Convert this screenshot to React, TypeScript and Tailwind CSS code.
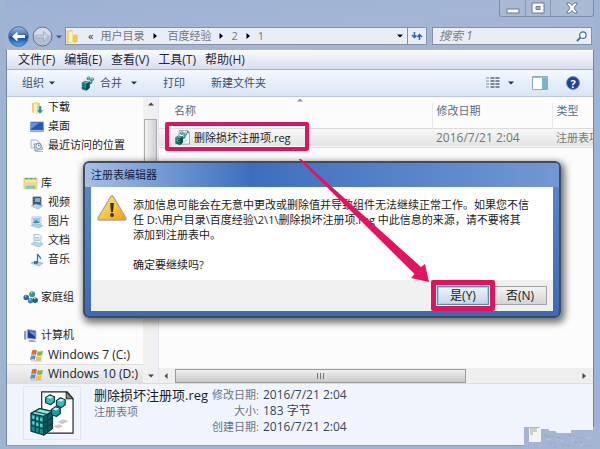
import React from "react";

const FONT = "font-['Open_Sans','Noto_Sans_CJK_SC',sans-serif]";

function Icon({ children, className = "size-[14px]", box = "0 0 14 14" }: { children: React.ReactNode; className?: string; box?: string }) {
  return (
    <svg viewBox={box} className={`shrink-0 ${className}`} aria-hidden="true">
      {children}
    </svg>
  );
}

const Arrow = ({ dir = "down", className = "" }: { dir?: "down" | "up" | "left" | "right"; className?: string }) => {
  const d = {
    down: "M0 1.5h6L3 4.5z",
    up: "M0 4.5h6L3 1.5z",
    left: "M4.5 0v6L1.5 3z",
    right: "M1.5 0v6L5 3z",
  }[dir];
  return (
    <svg viewBox="0 0 6 6" className={`size-[6px] shrink-0 ${className}`} aria-hidden="true">
      <path d={d} fill="currentColor" />
    </svg>
  );
};

const Folder = () => (
  <Icon className="size-[15px]">
    <path d="M1 2l4-1 1 1v10l-5 1z" fill="#f4dc7c" stroke="#d9b84c" strokeWidth=".5" />
    <path d="M6 6l3-1 2 1v6l-3 1-2-1z" fill="#eecb58" />
    <path d="M3 2.500l3 .5v10l-3-1z" fill="#fdf3b8" />
  </Icon>
);

const Downloads = () => (
  <Icon>
    <path d="M2 2l4-1 4 1v9l-4 2-4-2z" fill="#f0d271" />
    <path d="M4 2l3 1v10l-3-1z" fill="#fbf0b0" />
    <path d="M8.500 5h3v4h2L10 13 6.500 9h2z" fill="#2a8cc4" stroke="#dff0f8" strokeWidth=".5" />
  </Icon>
);

const Desktop = () => (
  <Icon>
    <path d="M.5 2h13v9.500H.5z" fill="#2558bd" stroke="#7b9fce" strokeWidth=".8" />
    <path d="M1 3h8l-8 6z" fill="#5f91e0" />
    <path d="M1 10.500h12" stroke="#a9c2e6" />
  </Icon>
);

const Recent = () => (
  <Icon>
    <path d="M1 1h6l2 2v6H1z" fill="#f2f6fa" stroke="#8e9fae" strokeWidth=".7" />
    <path d="M4 5l6-1 3 6-8 2z" fill="#c9d8e6" stroke="#6f8aa5" strokeWidth=".7" />
    <circle cx="8.500" cy="7" r="2.500" fill="#fff" stroke="#4b78a4" strokeWidth=".7" />
    <path d="M8.500 5.500V7H10" stroke="#335" strokeWidth=".6" fill="none" />
    <path d="M5 12.500h8" stroke="#a9c1d9" />
  </Icon>
);

const Library = () => (
  <Icon className="size-[15px]">
    <path d="M1 2h12v10H1z" fill="#f6e6a0" stroke="#d3b963" strokeWidth=".7" />
    <path d="M2 2.500h3M6 2.500h3M10 2.500h2" stroke="#58a68c" strokeWidth="1.500" />
    <path d="M1 6h12v6H1z" fill="#efd985" />
    <path d="M3 12V9.500h8V12" fill="#8cc5de" stroke="#6da7c8" strokeWidth=".5" />
  </Icon>
);

const Video = () => (
  <Icon>
    <path d="M3 1h8v9H3z" fill="#3b5673" stroke="#263c52" strokeWidth=".6" />
    <path d="M5 2h5v4H5z" fill="#7fb1d3" />
    <path d="M4 1v9M10.500 1v9" stroke="#a8b9c6" strokeWidth=".5" strokeDasharray="1 1" />
    <path d="M1 10l5-2 7 2-5 3z" fill="#b9d4e7" stroke="#7fa5c2" strokeWidth=".5" />
  </Icon>
);

const Pictures = () => (
  <Icon>
    <path d="M2 2h9v7H2z" fill="#fff" stroke="#8fabc3" strokeWidth=".7" />
    <path d="M3 3h7v5H3z" fill="#8fcaec" />
    <path d="M3 8l3-3 4 3z" fill="#3c8f9d" />
    <path d="M1 10.500l4-2 8 2-4 2.500z" fill="#aad0eb" stroke="#6da0c8" strokeWidth=".5" />
  </Icon>
);

const Documents = () => (
  <Icon>
    <path d="M4 .5h5l2 2V10H4z" fill="#f1f8fc" stroke="#8aabc1" strokeWidth=".7" />
    <path d="M5 3.500h4M5 5h5M5 6.500h5" stroke="#7fb4cf" strokeWidth=".7" />
    <path d="M1 10l4-2 8 2-4 3z" fill="#b5d6e9" stroke="#7fa8c4" strokeWidth=".5" />
  </Icon>
);

const Music = () => (
  <Icon>
    <path d="M1 10l4-2 8 2-4 3z" fill="#a7cfea" stroke="#6fa4c8" strokeWidth=".5" />
    <ellipse cx="5.800" cy="9.500" rx="2.200" ry="1.600" fill="#2177b5" />
    <path d="M7.500 9.500V1c.5 2 3 2 3 5" fill="none" stroke="#2177b5" strokeWidth="1.300" />
  </Icon>
);

const HomeGroup = () => (
  <Icon className="size-[15px]">
    <circle cx="3" cy="7" r="2.600" fill="#3566a8" />
    <circle cx="8.500" cy="4" r="2.800" fill="#3c9a7b" />
    <circle cx="7" cy="10" r="2.500" fill="#3b86b8" />
    <circle cx="11.300" cy="9.500" r="2.600" fill="#1e6a68" />
    <path d="M2 6l1-.8M7.500 3l1.200-.8M6 9.500l1-.8M10.500 8.500l1-.8" stroke="#d6f0ee" strokeWidth="1" />
  </Icon>
);

const Computer = () => (
  <Icon className="size-[15px]">
    <path d="M4 1.500l8 1v8l-8-1z" fill="#203a9e" stroke="#a8b3cd" strokeWidth=".8" />
    <path d="M5 3l6 5V3.500z" fill="#6f8ee8" />
    <path d="M1 3l2-.5V11l-2-.5z" fill="#8b96b6" />
    <path d="M5 11l5 .5 3 1.500H6z" fill="#9ba5bb" />
  </Icon>
);

const WinDrive = () => (
  <Icon>
    <path d="M2 2.500c2-1 3-1 5 0L6 7c-1.500-.8-3-.8-4.800 0z" fill="#de6b3c" />
    <path d="M7.800 3c2 .8 3 .8 5.200-.2l-1 4.400c-2 .8-3.500.8-5.200 0z" fill="#7db84a" />
    <path d="M1 7.800c2-.8 3.200-.8 4.800 0l-1 4C3.500 11 2 11 0 12z" fill="#5a8fd6" />
    <path d="M6.600 8c1.800.8 3.200.8 5.200 0l-1 4.200c-2 .8-3.500.8-5.200 0z" fill="#eec14a" />
    <path d="M1 13h11" stroke="#a9b0b6" strokeWidth=".8" />
  </Icon>
);

/* Registry cubes: a large block with three smaller ones flying off. */
const Cubes = () => (
  <g stroke="#063b40" strokeWidth="1.200" strokeLinejoin="round">
    <path d="M2 24l9-5 13 3v17l-9 7-13-4z" fill="#168a8c" />
    <path d="M2 24l9-5 13 3-9 5z" fill="#8fe3e0" />
    <path d="M15 27l9-5v17l-9 7z" fill="#0b5c62" />
    <path d="M6.500 25v18M10.500 26v19M2 30l13 4 9-6M2 36l13 4 9-6M6 22l13 3M19 25v18" fill="none" />
    <path d="M3.500 26l2 .5v3l-2-.5zM7.500 27.500l2 .5v3l-2-.5zM11.500 28.500l2 .5v3l-2-.5zM3.500 32l2 .5v3l-2-.5zM7.500 33.500l2 .5v3l-2-.5zM11.500 34.500l2 .5v3l-2-.5z" fill="#68d8d5" stroke="none" />
    <path d="M17 8l4-3 5 2v5l-4 3-5-2z" fill="#3cb6b6" />
    <path d="M28 11l4-3 5 2v5l-4 3-5-2z" fill="#3cb6b6" />
    <path d="M23 20l4-3 5 2v5l-4 3-5-2z" fill="#259b9d" />
    <path d="M18 8l3-2 4 1-3 2zM29 11l3-2 4 1-3 2zM24 20l3-2 4 1-3 2z" fill="#b7f2ee" stroke="none" />
  </g>
);

const RegFile = ({ className }: { className: string }) => (
  <Icon className={className} box="0 0 47 47">
    <path d="M13 2h26l6 7v35H13z" fill="#fff" stroke="#222" strokeWidth="1.200" />
    <path d="M38 2v7h7z" fill="#888" stroke="#222" />
    <path d="M29 33l6-3 5 2-6 3zM25 37l6-2 4 2-6 2z" fill="#c9c9c9" />
    <Cubes />
  </Icon>
);

type Item = { icon?: React.ReactNode; text?: string; root?: boolean; latin?: boolean; selected?: boolean };

const TREE: Item[] = [
  { icon: <Downloads />, text: "下载" },
  { icon: <Desktop />, text: "桌面" },
  { icon: <Recent />, text: "最近访问的位置" },
  {},
  { icon: <Library />, text: "库", root: true },
  { icon: <Video />, text: "视频" },
  { icon: <Pictures />, text: "图片" },
  { icon: <Documents />, text: "文档" },
  { icon: <Music />, text: "音乐" },
  {},
  { icon: <HomeGroup />, text: "家庭组", root: true },
  {},
  { icon: <Computer />, text: "计算机", root: true },
  { icon: <WinDrive />, text: "Windows 7 (C:)", latin: true },
  { icon: <WinDrive />, text: "Windows 10 (D:)", latin: true, selected: true },
];

function TitleBar() {
  return (
    <header className="flex h-[25px] items-start justify-end">
      <div className="flex h-[17px] overflow-hidden rounded-b-[3px] border border-t-0 border-[#7d8da8] bg-[#a9b9d3]">
        <button aria-label="最小化" className="flex w-[26px] items-center justify-center border-r border-[#8999b3]">
          <svg viewBox="0 0 14 12" className="h-3 w-[14px]"><rect x="1" y="7" width="12" height="4" fill="#fff" stroke="#68778e" /></svg>
        </button>
        <button aria-label="最大化" className="flex w-[25px] items-center justify-center border-r border-[#8999b3]">
          <svg viewBox="0 0 14 12" className="h-3 w-[14px]"><path fillRule="evenodd" d="M1 1h12v10H1zM5 4.500v3h4v-3z" fill="#fff" stroke="#68778e" /></svg>
        </button>
        <button aria-label="关闭" className="flex w-[42px] items-center justify-center">
          <svg viewBox="0 0 14 12" className="h-3 w-[14px]"><path d="M1.500 1h3.500l2 2.500L9 1h3.500L9 6l3.500 5H9L7 8.500 5 11H1.500L5 6z" fill="#fff" stroke="#68778e" /></svg>
        </button>
      </div>
    </header>
  );
}

function AddressBar() {
  return (
    <div className="flex h-[25px] items-start pr-[2px]">
      <div className="flex h-[23px] w-[59px] items-center gap-[3px] pl-[2px]">
        <button aria-label="后退" className="size-[21px]">
          <svg viewBox="0 0 21 21" className="size-[21px]">
            <defs>
              <linearGradient id="back" x1="0" y1="0" x2="0" y2="1">
                <stop offset="0" stopColor="#9fbce4" /><stop offset=".45" stopColor="#3c6cb6" /><stop offset=".55" stopColor="#17479b" /><stop offset="1" stopColor="#4fb4ec" />
              </linearGradient>
            </defs>
            <circle cx="10.500" cy="10.500" r="9.800" fill="url(#back)" stroke="#4e6a96" />
            <path d="M4 10.500l5.500-5v3.500H17v3H9.500v3.500z" fill="#fff" />
          </svg>
        </button>
        <button aria-label="前进" className="size-[21px]">
          <svg viewBox="0 0 21 21" className="size-[21px]">
            <circle cx="10.500" cy="10.500" r="9.500" fill="#b3bfd0" stroke="#66758f" />
            <path d="M2 9a8.600 8.600 0 0117 0c-6 2-11 2-17 0z" fill="#d5dce6" />
            <path d="M17 10.500l-5.500-5v3.500H4v3h7.500v3.500z" fill="#c5ced9" stroke="#98a5b6" strokeWidth=".7" />
          </svg>
        </button>
        <button aria-label="最近页面"><Arrow className="text-[#31598f]" /></button>
      </div>
      <div className="mt-[2px] flex h-[18px] flex-1 items-center border border-[#8191ab] bg-[#e9edf5] text-[11px] text-[#707781]">
        <div className="flex flex-1 items-center whitespace-nowrap">
          <Folder />
          <span className="ml-[7px] text-[#333]">«</span>
          <span className="ml-[7px]">用户目录</span>
          <Arrow dir="right" className="ml-2 text-black" />
          <span className="ml-[9px]">百度经验</span>
          <Arrow dir="right" className="ml-[7px] text-black" />
          <span className="ml-[7px]">2</span>
          <Arrow dir="right" className="ml-[7px] text-black" />
          <span className="ml-[7px]">1</span>
        </div>
        <button aria-label="历史" className="mr-1"><Arrow className="text-black" /></button>
        <button aria-label="刷新" className="flex h-full w-[19px] items-center justify-center border-l border-[#8191ab]">
          <svg viewBox="0 0 12 10" className="h-[10px] w-3" fill="none" stroke="#2c64aa" strokeWidth="1.500">
            <path d="M3.500 1v5M1 4l2.500 2.500L5.500 4.500M8.500 9V4M6.500 6l2-2.500L11 6" />
          </svg>
        </button>
      </div>
      <label className="mt-[2px] ml-[5px] flex h-[18px] w-[160px] items-center border border-[#8191ab] bg-[#e9edf5] pr-1">
        <input aria-label="搜索" placeholder="搜索 1" className="min-w-0 flex-1 bg-transparent pl-[6px] text-[12px] italic outline-none placeholder:text-[#777d86]" />
        <svg viewBox="0 0 12 12" className="size-[11px]" fill="none" stroke="#45689c"><circle cx="7.500" cy="4.500" r="3.500" strokeWidth="1.300" fill="#f5fbff" /><path d="M5 7L1 11" strokeWidth="2" /></svg>
      </label>
    </div>
  );
}

function Toolbar() {
  return (
    <div className="flex h-[27px] items-center border-b border-[#b9c6d9] bg-linear-to-b from-[#f5f9fe] via-[#e6eef9] to-[#dae5f4] pl-[15px] text-[11px] text-[#3b4f70]">
      <button className="flex items-center gap-[5px]">组织<Arrow className="text-[#25344c]" /></button>
      <button className="ml-[26px] flex items-center gap-[5px]">
        <svg viewBox="0 0 40 48" className="h-4 w-[14px]"><Cubes /></svg>
        合并<Arrow className="ml-1 text-[#25344c]" />
      </button>
      <button className="ml-[26px]">打印</button>
      <button className="ml-[26px]">新建文件夹</button>
      <div className="ml-auto flex items-center pr-[13px]">
        <button aria-label="更改视图" className="flex items-center gap-2">
          <svg viewBox="0 0 15 13" className="h-[13px] w-[15px]">
            <path d="M1 1h3M1 4h3M1 7h3M1 10h3" stroke="#b7bfca" strokeWidth="2" />
            <path d="M5.500 1h4M5.500 4h4M5.500 7h4M5.500 10h4M10.500 1h4M10.500 4h4M10.500 7h4M10.500 10h4" stroke="#7c8897" strokeWidth="1.800" />
          </svg>
          <Arrow className="text-[#25344c]" />
        </button>
        <button aria-label="预览窗格" className="ml-[18px]">
          <svg viewBox="0 0 16 14" className="h-[14px] w-4"><path d="M.5.500h15v13H.5z" fill="#fff" stroke="#93a9b8" /><path d="M10 1h5v12h-5z" fill="#77b6c5" /><path d="M.5 1.500h15" stroke="#9ebfce" /></svg>
        </button>
        <button aria-label="帮助" className="ml-[18px] flex size-[14px] items-center justify-center rounded-full border border-[#8090bf] bg-[#20409e] text-[11px] leading-none font-bold text-white">?</button>
      </div>
    </div>
  );
}

function Sidebar() {
  return (
    <nav className="w-[136px] shrink-0 bg-[#fcfcfd] pt-px" aria-label="导航">
      <ul>
        {TREE.map((it, i) => (
          <li key={i} className={`h-[19px] ${it.selected ? "border-t border-[#dedede] bg-linear-to-b from-[#f4f4f4] to-[#dfdfdf]" : ""}`}>
            {it.text && (
              <a href="#" className={`flex h-full items-center whitespace-nowrap text-[#222] ${it.root ? "gap-[3px] pl-4" : "gap-1 pl-[23px]"} ${it.latin ? "text-[12px]" : "text-[11px]"}`}>
                {it.icon}
                {it.text}
              </a>
            )}
          </li>
        ))}
      </ul>
    </nav>
  );
}

function FileList() {
  return (
    <main className="flex min-w-0 flex-1 flex-col border-l border-[#e1e6ee] bg-[#fcfcfd]">
      <div className="flex justify-center pr-[152px]"><Arrow dir="up" className="text-[#7d97ac]" /></div>
      <table className="w-full table-fixed border-collapse text-left text-[11px]">
        <colgroup><col /><col className="w-[120px]" /><col className="w-[41px]" /></colgroup>
        <thead>
          <tr className="h-[22px] text-[#5a6b82]">
            <th className="border-r border-[#e6eaf0] pb-2 pl-[15px] font-normal">名称</th>
            <th className="border-r border-[#e6eaf0] pb-2 pl-1 font-normal">修改日期</th>
            <th className="pb-2 pl-1 font-normal">类型</th>
          </tr>
        </thead>
        <tbody>
          <tr className="h-[19px] border-y border-[#dcdcdc] bg-linear-to-b from-[#f7f7f7] to-[#e4e4e4] text-[#777]">
            <td className="pl-4">
              <a href="#" className="flex items-center gap-[4px] leading-4 text-[#222]"><RegFile className="size-[15px]" />删除损坏注册项.reg</a>
            </td>
            <td className="pl-1 text-[12px] leading-4 whitespace-nowrap">2016/7/21 2:04</td>
            <td className="overflow-hidden pl-1 leading-4 whitespace-nowrap">注册表项</td>
          </tr>
        </tbody>
      </table>
      <div className="mt-auto flex h-[15px] items-center bg-[#efefef] pr-[6px] pl-1 text-[#444]">
        <Arrow dir="left" />
        <div className="ml-[6px] flex h-[14px] w-[291px] items-center justify-center gap-[2px] border border-[#9b9b9b] bg-linear-to-b from-[#f1f0f1] to-[#c9c7ca]">
          <i className="h-[6px] w-px bg-[#777]" /><i className="h-[6px] w-px bg-[#777]" /><i className="h-[6px] w-px bg-[#777]" />
        </div>
        <Arrow dir="right" className="ml-auto" />
      </div>
    </main>
  );
}

function Details() {
  const rows = [["修改日期:", "2016/7/21 2:04"], ["大小:", "183 字节"], ["创建日期:", "2016/7/21 2:04"]];
  return (
    <footer className="flex h-[62px] border-t border-[#d5deea] bg-[#f0f4fc] pl-4">
      <div className="mt-[2px] flex h-[54px] w-[58px] items-center justify-center border border-[#e2e7ef]"><RegFile className="size-[46px]" /></div>
      <div className="ml-[13px] pt-[2px] whitespace-nowrap">
        <p className="text-[13px] leading-[18px] text-[#1d1d1d]">删除损坏注册项.reg</p>
        <p className="text-[11px] leading-[15px] text-[#6a7482]">注册表项</p>
      </div>
      <dl className="ml-1 grid auto-rows-[16px] grid-cols-[auto_auto] content-start gap-x-1 pt-[3px] whitespace-nowrap">
        {rows.map(([k, v]) => (
          <React.Fragment key={k}>
            <dt className="text-right text-[11px] leading-4 text-[#6a7482]">{k}</dt>
            <dd className="text-[12px] leading-4 text-[#39455a]">{v}</dd>
          </React.Fragment>
        ))}
      </dl>
    </footer>
  );
}

function Dialog() {
  return (
    <section role="dialog" aria-label="注册表编辑器" className="absolute top-[161px] left-[83px] w-[478px] rounded-[6px] border-2 border-[#3d4b63] bg-linear-to-b from-[#5c8bd0] to-[#3d6ab5] px-[6px] pb-[5px] shadow-[2px_3px_7px_2px_rgba(0,0,0,0.55)]">
      <div className="-mx-[6px] flex h-6 items-center rounded-t-[4px] bg-linear-to-r from-[#a7bfe4] via-[#3d6ebd] via-35% to-[#7398d2] pl-[6px]">
        <h1 className="text-[11px] text-[#14213a]">注册表编辑器</h1>
      </div>
      <div className="flex h-[93px] bg-white pt-2 pl-[6px]">
        <svg viewBox="0 0 30 26" className="h-[26px] w-[30px] shrink-0" aria-hidden="true">
          <defs><linearGradient id="warn" x1="0" y1="0" x2="1" y2="1"><stop offset="0" stopColor="#fff07a" /><stop offset="1" stopColor="#f09d13" /></linearGradient></defs>
          <path d="M13.500 2q1.500-2 3 0L29 23q.5 2-1.500 2h-25Q.5 25 1 23z" fill="url(#warn)" stroke="#a9a695" strokeWidth="1.300" />
          <path d="M13.200 8h3.600l-.8 9h-2z" fill="#322a19" /><circle cx="15" cy="20" r="1.900" fill="#322a19" />
        </svg>
        <p className="ml-[6px] pt-[2px] text-[11px] leading-[15px] whitespace-nowrap text-[#1a1a1a]">
          添加信息可能会在无意中更改或删除值并导致组件无法继续正常工作。如果您不信<br />
          任 D:\用户目录\百度经验\2\1\删除损坏注册项.reg 中此信息的来源，请不要将其<br />
          添加到注册表中。<br />
          <br />
          确定要继续吗?
        </p>
      </div>
      <div className="flex h-[31px] items-center justify-end gap-1 bg-[#f0f0f0] pr-[6px] text-[12px] text-[#1a1a1a]">
        <button className="h-[19px] w-[52px] border border-[#4b93b8] bg-linear-to-b from-[#eff5fa] to-[#c6d6e6] leading-4 ring-1 ring-[#9bd5ef] ring-inset">是(Y)</button>
        <button className="h-[19px] w-[54px] border border-[#a2a2a2] bg-linear-to-b from-[#f3f3f3] to-[#d4d4d4] leading-4">否(N)</button>
      </div>
    </section>
  );
}

export default function App() {
  return (
    <div className={`relative w-full overflow-hidden bg-linear-to-r from-[#8fa7cb] via-[#a9bbd7] via-40% to-[#9db1d0] ${FONT}`}>
      <div className="border-x-[6px] border-t-0 border-b-[5px] border-[#9fb3d3]">
        <div className="bg-linear-to-br from-[#9bb1d4] via-[#a4b6d5] to-[#a3b4d0]">
          <TitleBar />
          <AddressBar />
        </div>
        <div className="border border-t-0 border-[#75869f] border-b-[#8b9bb3]">
          <nav className="flex h-5 items-center gap-[9px] border-y border-t-white border-b-[#a9b3c6] bg-linear-to-b from-[#f8f9fd] to-[#d8dcef] pl-[11px] text-[12px] text-[#202838]" aria-label="菜单">
            {["文件(F)", "编辑(E)", "查看(V)", "工具(T)", "帮助(H)"].map((m) => (
              <button key={m} className="leading-4 whitespace-nowrap">{m}</button>
            ))}
          </nav>
          <Toolbar />
          <div className="flex">
            <Sidebar />
            <div className="flex w-[15px] shrink-0 flex-col items-center bg-[#f0f0f0] pt-1 pb-1 text-[#444]">
              <Arrow dir="up" />
              <div className="mt-3 h-[140px] w-[13px] border border-[#aaa] bg-linear-to-r from-[#f3f3f3] to-[#cfcfd1]" />
              <Arrow className="mt-auto" />
            </div>
            <FileList />
          </div>
          <Details />
        </div>
      </div>
      <Dialog />
      <div className="absolute top-[122px] left-[165px] h-[29px] w-[144px] rounded-[2px] border-4 border-[#d7175f]" />
      <div className="absolute top-[280px] left-[431px] h-[31px] w-[64px] rounded-[2px] border-[5px] border-[#e0135f]" />
      <svg viewBox="0 0 132 126" className="absolute top-[158px] left-[298px] h-[126px] w-[132px]" aria-hidden="true">
        <path d="M1 1.500Q2 0 4 2L123 109l4-3L131 124l-18-4 3.500-4z" fill="#e3145f" />
      </svg>
      <svg viewBox="0 0 76 25" className="absolute right-0 bottom-0 h-[25px] w-[76px]" aria-hidden="true">
        <path d="M0 1h16v2h8l2 2h5l2 2h14V4h22v-3h7v24H0z" fill="#a3b5d2" />
        <path d="M20 9h4v2h6M34 12h7M44 9h5l3 3h8M24 17h9M38 19l8 1M50 16h9M60 20h7M30 21h5" stroke="#93a6c5" fill="none" strokeDasharray="3 2" />
        <path d="M22 13h5M36 15h4M47 14h3M56 19h3M63 12h4" stroke="#b9c7de" fill="none" />
        <path d="M5 2h12v14H5z" fill="#f3f4f6" />
        <path d="M6 2h7v4H9v3H6z" fill="#cbcdd5" />
      </svg>
    </div>
  );
}
